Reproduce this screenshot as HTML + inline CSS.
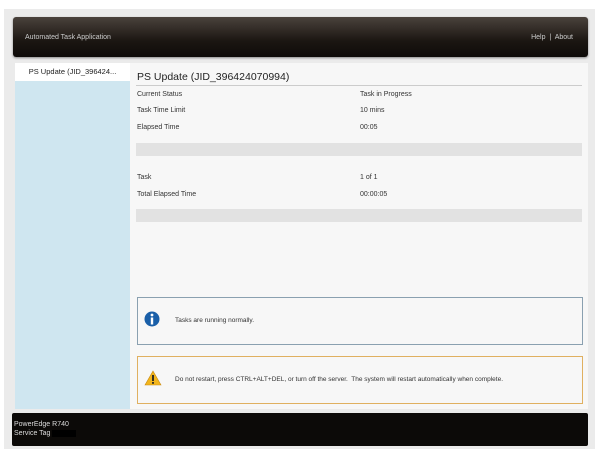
<html><head><style>
body{margin:0;width:600px;height:456px;background:#fff;font-family:"Liberation Sans",sans-serif;position:relative;overflow:hidden}
.a{position:absolute}
.frame{left:4px;top:9px;width:591px;height:440px;background:#ebebeb}
.hdr{left:13px;top:17px;width:575px;height:40px;border-radius:3px;background:linear-gradient(#4a423c,#1b1612 60%,#0e0b09);box-shadow:0 1px 2px #888;color:#ccc;font-size:7px}
.side{left:15px;top:63px;width:115px;height:346px;background:#cfe6f0}
.sel{left:15px;top:63px;width:115px;height:18px;background:#fff;font-size:7.5px;color:#222;text-align:center;line-height:18px}
.main{left:130px;top:63px;width:458px;height:346px;background:#f7f7f7}
.t{font-size:7px;color:#333}
.bar{background:#e2e2e2;height:13px;left:136px;width:446px}
.box{left:137px;width:444px;background:#f7f7f7}
.ftr{left:12px;top:413px;width:576px;height:33px;background:#0c0a08;border-radius:2px;color:#ddd;font-size:7px;line-height:9px}
</style></head><body>
<div class="a frame"></div>
<div class="a hdr"><span class="a" style="left:12px;top:17px">Automated Task Application</span><span class="a" style="right:15px;top:17px">Help &nbsp;|&nbsp; About</span></div>
<div class="a side"></div>
<div class="a sel">PS Update (JID_396424...</div>
<div class="a main"></div>
<div class="a" style="left:137px;top:71px;font-size:10.5px;color:#222">PS Update (JID_396424070994)</div>
<div class="a" style="left:136px;top:85px;width:446px;height:1px;background:#ccc"></div>
<div class="a t" style="left:137px;top:91px">Current Status</div><div class="a t" style="left:360px;top:91px">Task in Progress</div>
<div class="a t" style="left:137px;top:107px">Task Time Limit</div><div class="a t" style="left:360px;top:107px">10 mins</div>
<div class="a t" style="left:137px;top:124px">Elapsed Time</div><div class="a t" style="left:360px;top:124px">00:05</div>
<div class="a bar" style="top:143px"></div>
<div class="a t" style="left:137px;top:174px">Task</div><div class="a t" style="left:360px;top:174px">1 of 1</div>
<div class="a t" style="left:137px;top:191px">Total Elapsed Time</div><div class="a t" style="left:360px;top:191px">00:00:05</div>
<div class="a bar" style="top:209px"></div>
<div class="a box" style="top:297px;height:46px;border:1px solid #8aa0b0"></div>
<svg class="a" style="left:144px;top:310px" width="16" height="18"><circle cx="8" cy="9" r="7.5" fill="#1a5fa8"/><circle cx="8" cy="5" r="1.4" fill="#fff"/><rect x="6.8" y="7.5" width="2.4" height="7" fill="#fff"/></svg>
<div class="a t" style="left:175px;top:317px;font-size:6.5px">Tasks are running normally.</div>
<div class="a box" style="top:356px;height:46px;border:1px solid #e0b060"></div>
<svg class="a" style="left:144px;top:370px" width="18" height="16"><path d="M9 1 L17 15 L1 15 Z" fill="#f2b51c" stroke="#c98a10" stroke-width=".6"/><rect x="8.1" y="5" width="1.8" height="6" fill="#222"/><rect x="8.1" y="12" width="1.8" height="1.8" fill="#222"/></svg>
<div class="a t" style="left:175px;top:376px;font-size:6.5px">Do not restart, press CTRL+ALT+DEL, or turn off the server.&nbsp; The system will restart automatically when complete.</div>
<div class="a ftr"><div style="position:absolute;left:2px;top:7px">PowerEdge R740<br>Service Tag <span style="background:#000;color:#000">XXXXX</span></div></div>
</body></html>
